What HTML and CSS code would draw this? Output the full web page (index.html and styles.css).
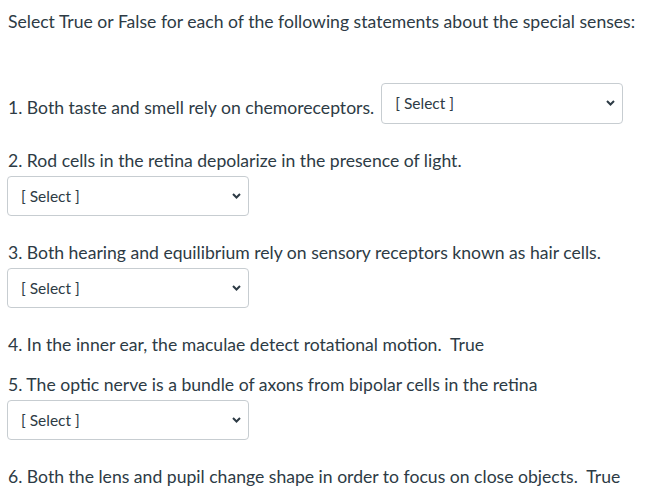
FILE: index.html
```html
<!DOCTYPE html>
<html lang="en">
<head>
<meta charset="utf-8">
<title>Special senses</title>
<link rel="stylesheet" href="styles.css">
</head>
<body>
<div class="quiz">
  <p class="title">Select True or False for each of the following statements about the special senses:</p>

  <div class="row-inline">
    <span class="q-text">1. Both taste and smell rely on chemoreceptors.</span>
    <div class="select wide">
      <span class="select-label">[ Select ]</span>
      <svg class="chev" width="9" height="6" viewBox="0 0 9 6"><path d="M1 1 L4.5 4.5 L8 1" fill="none" stroke="#2d3b45" stroke-width="2"/></svg>
    </div>
  </div>

  <div class="item">
    <p class="q-line">2. Rod cells in the retina depolarize in the presence of light.</p>
    <div class="select">
      <span class="select-label">[ Select ]</span>
      <svg class="chev" width="9" height="6" viewBox="0 0 9 6"><path d="M1 1 L4.5 4.5 L8 1" fill="none" stroke="#2d3b45" stroke-width="2"/></svg>
    </div>
  </div>

  <div class="item">
    <p class="q-line">3. Both hearing and equilibrium rely on sensory receptors known as hair cells.</p>
    <div class="select">
      <span class="select-label">[ Select ]</span>
      <svg class="chev" width="9" height="6" viewBox="0 0 9 6"><path d="M1 1 L4.5 4.5 L8 1" fill="none" stroke="#2d3b45" stroke-width="2"/></svg>
    </div>
  </div>

  <p class="q-line plain">4. In the inner ear, the maculae detect rotational motion.&nbsp; True</p>

  <div class="item">
    <p class="q-line">5. The optic nerve is a bundle of axons from bipolar cells in the retina</p>
    <div class="select">
      <span class="select-label">[ Select ]</span>
      <svg class="chev" width="9" height="6" viewBox="0 0 9 6"><path d="M1 1 L4.5 4.5 L8 1" fill="none" stroke="#2d3b45" stroke-width="2"/></svg>
    </div>
  </div>

  <p class="q-line plain">6. Both the lens and pupil change shape in order to focus on close objects.&nbsp; True</p>
</div>
</body>
</html>
```
FILE: styles.css
```css
html, body {
  margin: 0;
  padding: 0;
  background: #ffffff;
}

body {
  font-family: Lato, "Liberation Sans", sans-serif;
  font-size: 17.6px;
  line-height: 24px;
  color: #2d3b45;
}

.quiz {
  padding: 10px 8px 0 8px;
}

p {
  margin: 0;
}

.title {
  margin-bottom: 49px;
}

.row-inline {
  display: flex;
  align-items: flex-start;
  margin-bottom: 24px;
}

.row-inline .q-text {
  margin-top: 13px;
  margin-right: 7px;
}

.item {
  margin-bottom: 24px;
}

.q-line {
  margin: 0;
  padding-top: 1px;
}

.plain {
  margin-bottom: 15px;
}

.select {
  box-sizing: border-box;
  width: 242px;
  height: 40px;
  border: 1px solid #c7cdd1;
  border-radius: 4px;
  background: #ffffff;
  display: flex;
  align-items: center;
  justify-content: space-between;
  padding: 0 5px 0 13px;
  margin-top: 3px;
  margin-left: -1px;
  font-size: 15.5px;
  color: #2d3b45;
}

.select.wide {
  height: 41px;
  margin-top: 0;
  margin-left: 0;
  padding-bottom: 2px;
}

.select-label {
  line-height: 20px;
}

.chev {
  display: block;
  margin-right: 2px;
}
```
